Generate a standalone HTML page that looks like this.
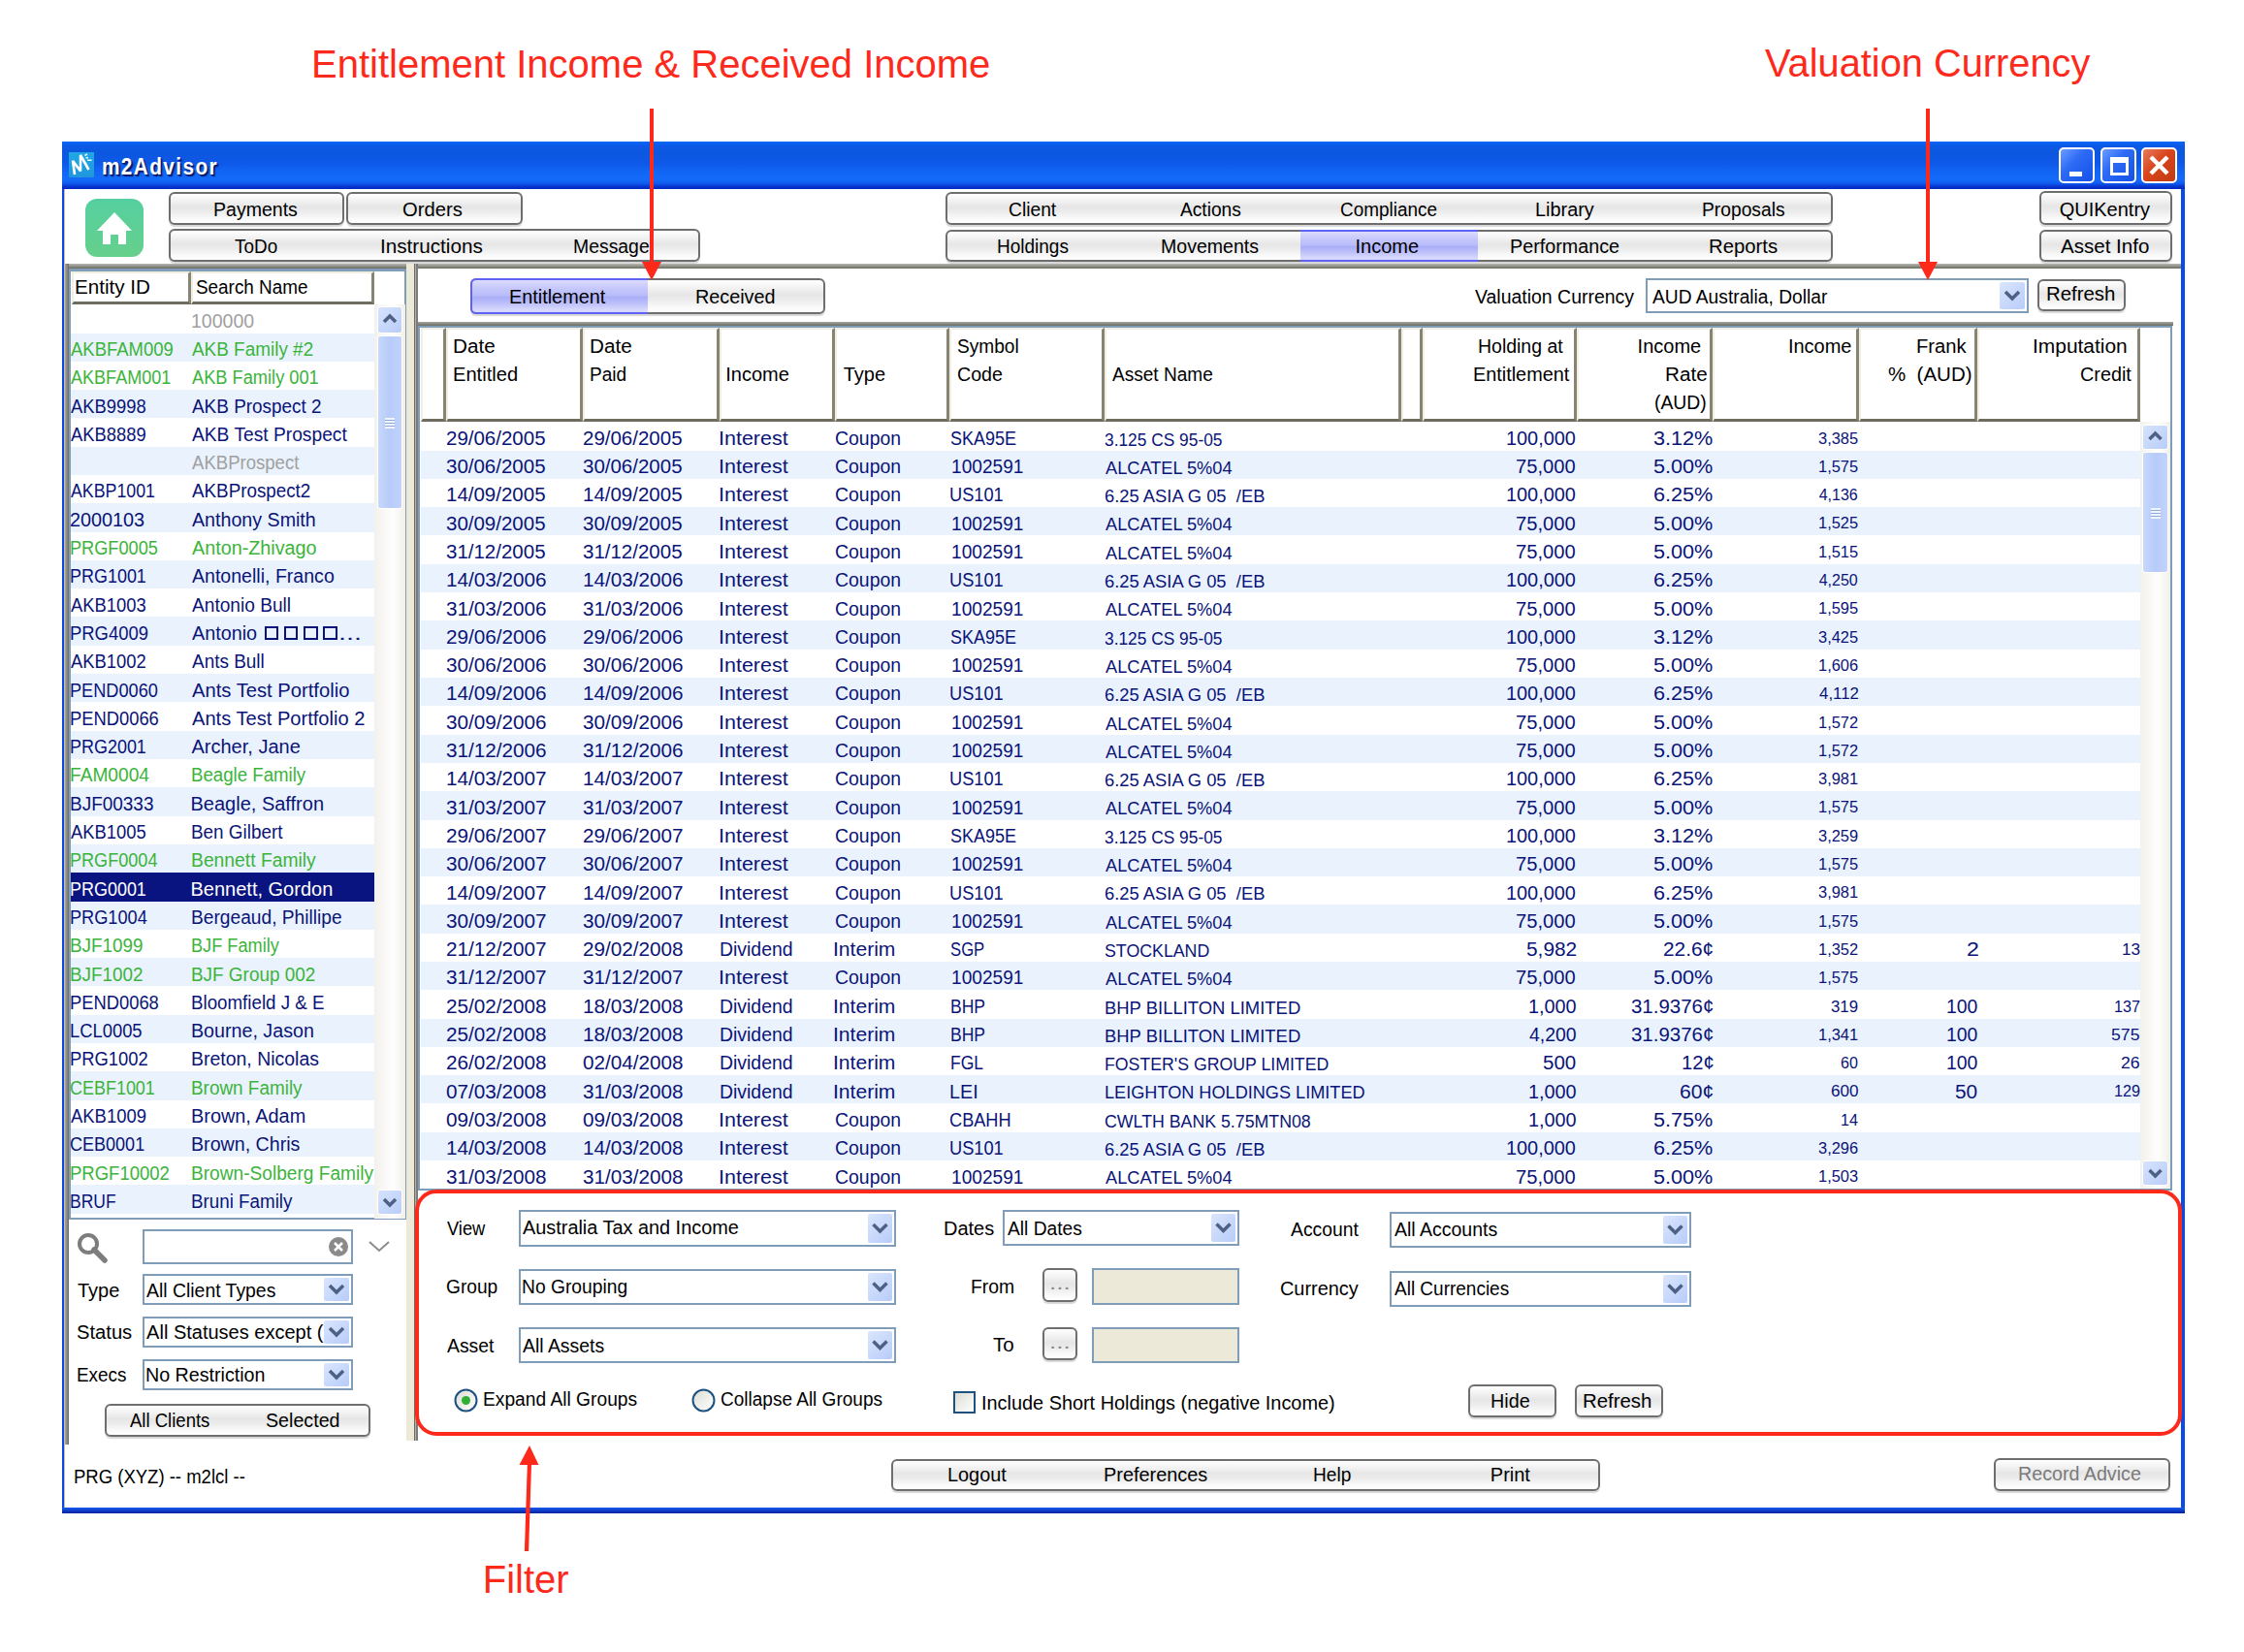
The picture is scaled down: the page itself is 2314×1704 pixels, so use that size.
<!DOCTYPE html><html><head><meta charset="utf-8"><title>m2Advisor</title><style>
*{margin:0;padding:0;box-sizing:border-box}
html,body{width:2314px;height:1704px;overflow:hidden;background:#fff}
body{position:relative;font-family:"Liberation Sans",sans-serif}
div{position:absolute}
.t{white-space:pre;line-height:1;transform-origin:0 0}
.btn{border:2px solid #6e6e6e;border-radius:6px;background:linear-gradient(#fff 0%,#f3f3f3 22%,#e6e6e6 45%,#ececec 62%,#f8f8f8 82%,#fff 100%);box-shadow:0 2px 1px rgba(0,0,0,.16)}
.combo{border:2px solid #7f9db9;background:#fff}
.dd{background:linear-gradient(135deg,#dbe6fd,#b7ccf9);border-radius:3px;border:1px solid #fff}
</style></head><body>
<div class="t" style="left:321.00px;top:45.64px;font-size:40px;color:#fd2a1c;">Entitlement Income &amp; Received Income</div>
<div class="t" style="left:1820.20px;top:45.14px;font-size:40px;color:#fd2a1c;transform:scaleX(0.9944);">Valuation Currency</div>
<div style="left:64px;top:146px;width:2189px;height:1415px;background:#fff"></div>
<div style="left:64px;top:146px;width:2189px;height:49px;background:linear-gradient(#0a66fa 0%,#0c5ae6 8%,#0c57de 22%,#0e58e8 45%,#1266f5 65%,#146af8 80%,#0e5cf0 88%,#0838d0 94%,#0028c0 100%)"></div>
<div style="left:64px;top:195px;width:2px;height:1366px;background:#0a48e0"></div>
<div style="left:66px;top:195px;width:1px;height:1366px;background:#c8c0b0"></div>
<div style="left:2249px;top:195px;width:4px;height:1366px;background:#0a4ae8"></div>
<div style="left:64px;top:1555px;width:2189px;height:6px;background:linear-gradient(#1a5af0,#0020a0)"></div>
<div class="t" style="left:104.82px;top:160.61px;font-size:23.5px;color:#fff;font-weight:bold;transform:scaleX(0.8835);text-shadow:1px 1px 0 #0a1a6a,2px 2px 1px #0a1a6a;letter-spacing:1.6px;">m2Advisor</div>
<div style="left:71px;top:157px;width:26px;height:26px;background:linear-gradient(#20a8e4,#2096dc)"><svg width="26" height="26" viewBox="0 0 26 26"><path d="M4 8.5 L6 23 M4.5 9.5 L12 19.5 L12 3 L20.5 18" stroke="#fff" stroke-width="2.6" fill="none" stroke-linejoin="bevel"/><path d="M19 8.3 L23.5 8.3 M16.5 3.5 L19 1.8 M17.5 6 L20 5.5" stroke="#e8f6ff" stroke-width="1.6"/></svg></div>
<div style="left:2123px;top:152px;width:37px;height:37px;border:2px solid #fff;border-radius:5px;background:linear-gradient(135deg,#6b9cff 0%,#2d6bf5 40%,#1450e8 100%)"><div style="left:9px;top:23px;width:13px;height:5px;background:#fff"></div></div>
<div style="left:2166px;top:152px;width:37px;height:37px;border:2px solid #fff;border-radius:5px;background:linear-gradient(135deg,#6b9cff 0%,#2d6bf5 40%,#1450e8 100%)"><div style="left:8px;top:8px;width:19px;height:19px;border:3px solid #fff;border-top-width:6px"></div></div>
<div style="left:2208px;top:152px;width:37px;height:37px;border:2px solid #fff;border-radius:5px;background:linear-gradient(135deg,#e8795a 0%,#d8451c 45%,#c23a12 100%)"><svg width="37" height="37" style="position:absolute;left:-2px;top:-2px"><path d="M10 10 L27 27 M27 10 L10 27" stroke="#fff" stroke-width="4.5"/></svg></div>
<div style="left:88px;top:205px;width:60px;height:60px;border-radius:12px;background:linear-gradient(#55cfa0,#66d08c)"><svg width="60" height="60" viewBox="0 0 60 60"><path d="M30 14 L48 33 L42 33 L42 47 L34 47 L34 37 L26 37 L26 47 L18 47 L18 33 L12 33 Z" fill="#fff"/></svg></div>
<div class="btn" style="left:174px;top:198px;width:181px;height:34px;"></div>
<div class="t" style="left:220.02px;top:205.87px;font-size:20px;color:#000;transform:scaleX(0.9770);">Payments</div>
<div class="btn" style="left:357px;top:198px;width:182px;height:34px;"></div>
<div class="t" style="left:415.39px;top:205.87px;font-size:20px;color:#000;transform:scaleX(1.0102);">Orders</div>
<div class="btn" style="left:174px;top:236px;width:548px;height:34px;"></div>
<div class="t" style="left:241.70px;top:243.97px;font-size:20px;color:#000;transform:scaleX(0.9457);">ToDo</div>
<div class="t" style="left:391.93px;top:243.97px;font-size:20px;color:#000;transform:scaleX(1.0340);">Instructions</div>
<div class="t" style="left:590.83px;top:243.97px;font-size:20px;color:#000;transform:scaleX(0.9696);">Message</div>
<div class="btn" style="left:975px;top:198px;width:915px;height:34px;"></div>
<div class="t" style="left:1039.94px;top:205.57px;font-size:20px;color:#000;transform:scaleX(0.9620);">Client</div>
<div class="t" style="left:1216.60px;top:205.57px;font-size:20px;color:#000;transform:scaleX(0.9585);">Actions</div>
<div class="t" style="left:1381.95px;top:205.57px;font-size:20px;color:#000;transform:scaleX(0.9462);">Compliance</div>
<div class="t" style="left:1583.01px;top:205.57px;font-size:20px;color:#000;transform:scaleX(0.9933);">Library</div>
<div class="t" style="left:1754.94px;top:205.57px;font-size:20px;color:#000;transform:scaleX(0.9621);">Proposals</div>
<div class="btn" style="left:975px;top:237px;width:915px;height:33px;"></div>
<div style="left:1341px;top:237px;width:183px;height:33px;background:linear-gradient(#dcdcfd 0%,#c6c8fb 25%,#b9bcfa 48%,#a9aef8 53%,#bcbffa 72%,#d6d8fc 92%);border-top:2px solid #5f62f4;border-bottom:2px solid #5f62f4"></div>
<div class="t" style="left:1028.45px;top:243.77px;font-size:20px;color:#000;transform:scaleX(0.9500);">Holdings</div>
<div class="t" style="left:1196.92px;top:243.77px;font-size:20px;color:#000;transform:scaleX(0.9775);">Movements</div>
<div class="t" style="left:1397.50px;top:243.77px;font-size:20px;color:#000;">Income</div>
<div class="t" style="left:1557.01px;top:243.77px;font-size:20px;color:#000;transform:scaleX(0.9867);">Performance</div>
<div class="t" style="left:1762.09px;top:243.77px;font-size:20px;color:#000;transform:scaleX(1.0147);">Reports</div>
<div class="btn" style="left:2103px;top:197px;width:137px;height:35px;"></div>
<div class="t" style="left:2123.70px;top:205.57px;font-size:20px;color:#000;">QUIKentry</div>
<div class="btn" style="left:2103px;top:237px;width:137px;height:33px;"></div>
<div class="t" style="left:2124.70px;top:244.07px;font-size:20px;color:#000;transform:scaleX(1.0273);">Asset Info</div>
<div style="left:67px;top:272px;width:2182px;height:5px;background:linear-gradient(#b8b8b4,#6b6b60)"></div>
<div style="left:67px;top:272px;width:4px;height:1218px;background:linear-gradient(90deg,#a8a8a4,#6b6b60)"></div>
<div style="left:71px;top:277px;width:348px;height:981px;border:2px solid #7f9db9;border-top-width:3px;background:#fff"></div>
<div style="left:74px;top:280px;width:123px;height:34px;background:#fff;border:2px solid #f1efe2;border-bottom:3px solid #6e6c5f;border-right:3px solid #878474"></div>
<div style="left:197px;top:280px;width:189px;height:34px;background:#fff;border:2px solid #f1efe2;border-bottom:3px solid #6e6c5f;border-right:3px solid #878474"></div>
<div class="t" style="left:77.07px;top:286.37px;font-size:20px;color:#000;transform:scaleX(1.0311);">Entity ID</div>
<div class="t" style="left:201.56px;top:286.37px;font-size:20px;color:#000;transform:scaleX(0.9446);">Search Name</div>
<div class="t" style="left:197.22px;top:320.67px;font-size:20px;color:#a0a0a0;transform:scaleX(0.9769);">100000</div>
<div style="left:73px;top:344px;width:313px;height:29px;background:#eaf3fd"></div>
<div class="t" style="left:73.20px;top:349.97px;font-size:20px;color:#3cb43c;transform:scaleX(0.9237);">AKBFAM009</div>
<div class="t" style="left:197.50px;top:349.97px;font-size:20px;color:#3cb43c;transform:scaleX(0.9462);">AKB Family #2</div>
<div class="t" style="left:73.20px;top:379.27px;font-size:20px;color:#3cb43c;transform:scaleX(0.9026);">AKBFAM001</div>
<div class="t" style="left:197.50px;top:379.27px;font-size:20px;color:#3cb43c;transform:scaleX(0.9119);">AKB Family 001</div>
<div style="left:73px;top:402px;width:313px;height:29px;background:#eaf3fd"></div>
<div class="t" style="left:73.20px;top:408.57px;font-size:20px;color:#0a1478;transform:scaleX(0.9190);">AKB9998</div>
<div class="t" style="left:197.50px;top:408.57px;font-size:20px;color:#0a1478;transform:scaleX(0.9464);">AKB Prospect 2</div>
<div class="t" style="left:73.20px;top:437.87px;font-size:20px;color:#0a1478;transform:scaleX(0.9190);">AKB8889</div>
<div class="t" style="left:197.50px;top:437.87px;font-size:20px;color:#0a1478;transform:scaleX(0.9602);">AKB Test Prospect</div>
<div style="left:73px;top:461px;width:313px;height:29px;background:#eaf3fd"></div>
<div class="t" style="left:197.50px;top:467.17px;font-size:20px;color:#a0a0a0;transform:scaleX(0.9277);">AKBProspect</div>
<div class="t" style="left:73.20px;top:496.47px;font-size:20px;color:#0a1478;transform:scaleX(0.8887);">AKBP1001</div>
<div class="t" style="left:197.50px;top:496.47px;font-size:20px;color:#0a1478;transform:scaleX(0.9403);">AKBProspect2</div>
<div style="left:73px;top:519px;width:313px;height:30px;background:#eaf3fd"></div>
<div class="t" style="left:72.21px;top:525.77px;font-size:20px;color:#0a1478;transform:scaleX(0.9908);">2000103</div>
<div class="t" style="left:197.50px;top:525.77px;font-size:20px;color:#0a1478;transform:scaleX(0.9822);">Anthony Smith</div>
<div class="t" style="left:72.29px;top:555.07px;font-size:20px;color:#3cb43c;transform:scaleX(0.9081);">PRGF0005</div>
<div class="t" style="left:197.50px;top:555.07px;font-size:20px;color:#3cb43c;transform:scaleX(0.9885);">Anton-Zhivago</div>
<div style="left:73px;top:578px;width:313px;height:29px;background:#eaf3fd"></div>
<div class="t" style="left:72.30px;top:584.37px;font-size:20px;color:#0a1478;transform:scaleX(0.8977);">PRG1001</div>
<div class="t" style="left:197.50px;top:584.37px;font-size:20px;color:#0a1478;transform:scaleX(0.9780);">Antonelli, Franco</div>
<div class="t" style="left:73.20px;top:613.67px;font-size:20px;color:#0a1478;transform:scaleX(0.9190);">AKB1003</div>
<div class="t" style="left:197.50px;top:613.67px;font-size:20px;color:#0a1478;transform:scaleX(0.9557);">Antonio Bull</div>
<div style="left:73px;top:636px;width:313px;height:30px;background:#eaf3fd"></div>
<div class="t" style="left:72.28px;top:642.97px;font-size:20px;color:#0a1478;transform:scaleX(0.9221);">PRG4009</div>
<div class="t" style="left:197.50px;top:642.97px;font-size:20px;color:#0a1478;transform:scaleX(0.9896);">Antonio</div>
<div style="left:272.9px;top:646px;width:14.5px;height:14px;border:2px solid #0a1478"></div>
<div style="left:292.8px;top:646px;width:14.5px;height:14px;border:2px solid #0a1478"></div>
<div style="left:313.4px;top:646px;width:14.5px;height:14px;border:2px solid #0a1478"></div>
<div style="left:333.3px;top:646px;width:14.5px;height:14px;border:2px solid #0a1478"></div>
<div class="t" style="left:349.02px;top:642.97px;font-size:20px;color:#0a1478;transform:scaleX(1.4385);">...</div>
<div class="t" style="left:73.20px;top:672.27px;font-size:20px;color:#0a1478;transform:scaleX(0.9190);">AKB1002</div>
<div class="t" style="left:197.50px;top:672.27px;font-size:20px;color:#0a1478;transform:scaleX(0.9474);">Ants Bull</div>
<div style="left:73px;top:695px;width:313px;height:29px;background:#eaf3fd"></div>
<div class="t" style="left:72.29px;top:701.57px;font-size:20px;color:#0a1478;transform:scaleX(0.9081);">PEND0060</div>
<div class="t" style="left:197.50px;top:701.57px;font-size:20px;color:#0a1478;transform:scaleX(1.0100);">Ants Test Portfolio</div>
<div class="t" style="left:72.28px;top:730.87px;font-size:20px;color:#0a1478;transform:scaleX(0.9173);">PEND0066</div>
<div class="t" style="left:197.50px;top:730.87px;font-size:20px;color:#0a1478;transform:scaleX(1.0051);">Ants Test Portfolio 2</div>
<div style="left:73px;top:754px;width:313px;height:29px;background:#eaf3fd"></div>
<div class="t" style="left:72.30px;top:760.17px;font-size:20px;color:#0a1478;transform:scaleX(0.8977);">PRG2001</div>
<div class="t" style="left:197.50px;top:760.17px;font-size:20px;color:#0a1478;">Archer, Jane</div>
<div class="t" style="left:72.24px;top:789.47px;font-size:20px;color:#3cb43c;transform:scaleX(0.9571);">FAM0004</div>
<div class="t" style="left:196.57px;top:789.47px;font-size:20px;color:#3cb43c;transform:scaleX(0.9325);">Beagle Family</div>
<div style="left:73px;top:812px;width:313px;height:30px;background:#eaf3fd"></div>
<div class="t" style="left:72.25px;top:818.77px;font-size:20px;color:#0a1478;transform:scaleX(0.9483);">BJF00333</div>
<div class="t" style="left:196.50px;top:818.77px;font-size:20px;color:#0a1478;">Beagle, Saffron</div>
<div class="t" style="left:73.20px;top:848.07px;font-size:20px;color:#0a1478;transform:scaleX(0.9190);">AKB1005</div>
<div class="t" style="left:196.56px;top:848.07px;font-size:20px;color:#0a1478;transform:scaleX(0.9444);">Ben Gilbert</div>
<div style="left:73px;top:871px;width:313px;height:29px;background:#eaf3fd"></div>
<div class="t" style="left:72.30px;top:877.37px;font-size:20px;color:#3cb43c;transform:scaleX(0.9040);">PRGF0004</div>
<div class="t" style="left:196.53px;top:877.37px;font-size:20px;color:#3cb43c;transform:scaleX(0.9654);">Bennett Family</div>
<div style="left:73px;top:900px;width:313px;height:30px;background:#0a1480"></div>
<div class="t" style="left:72.30px;top:906.67px;font-size:20px;color:#fff;transform:scaleX(0.8977);">PRG0001</div>
<div class="t" style="left:196.50px;top:906.67px;font-size:20px;color:#fff;">Bennett, Gordon</div>
<div style="left:73px;top:930px;width:313px;height:29px;background:#eaf3fd"></div>
<div class="t" style="left:72.29px;top:935.97px;font-size:20px;color:#0a1478;transform:scaleX(0.9080);">PRG1004</div>
<div class="t" style="left:196.54px;top:935.97px;font-size:20px;color:#0a1478;transform:scaleX(0.9584);">Bergeaud, Phillipe</div>
<div class="t" style="left:72.26px;top:965.27px;font-size:20px;color:#3cb43c;transform:scaleX(0.9423);">BJF1099</div>
<div class="t" style="left:196.59px;top:965.27px;font-size:20px;color:#3cb43c;transform:scaleX(0.9081);">BJF Family</div>
<div style="left:73px;top:988px;width:313px;height:29px;background:#eaf3fd"></div>
<div class="t" style="left:72.26px;top:994.57px;font-size:20px;color:#3cb43c;transform:scaleX(0.9423);">BJF1002</div>
<div class="t" style="left:196.55px;top:994.57px;font-size:20px;color:#3cb43c;transform:scaleX(0.9455);">BJF Group 002</div>
<div class="t" style="left:72.28px;top:1023.87px;font-size:20px;color:#0a1478;transform:scaleX(0.9173);">PEND0068</div>
<div class="t" style="left:196.56px;top:1023.87px;font-size:20px;color:#0a1478;transform:scaleX(0.9366);">Bloomfield J &amp; E</div>
<div style="left:73px;top:1047px;width:313px;height:29px;background:#eaf3fd"></div>
<div class="t" style="left:72.28px;top:1053.17px;font-size:20px;color:#0a1478;transform:scaleX(0.9187);">LCL0005</div>
<div class="t" style="left:196.52px;top:1053.17px;font-size:20px;color:#0a1478;transform:scaleX(0.9835);">Bourne, Jason</div>
<div class="t" style="left:72.28px;top:1082.47px;font-size:20px;color:#0a1478;transform:scaleX(0.9186);">PRG1002</div>
<div class="t" style="left:196.53px;top:1082.47px;font-size:20px;color:#0a1478;transform:scaleX(0.9731);">Breton, Nicolas</div>
<div style="left:73px;top:1105px;width:313px;height:30px;background:#eaf3fd"></div>
<div class="t" style="left:72.30px;top:1111.77px;font-size:20px;color:#3cb43c;transform:scaleX(0.8979);">CEBF1001</div>
<div class="t" style="left:196.55px;top:1111.77px;font-size:20px;color:#3cb43c;transform:scaleX(0.9458);">Brown Family</div>
<div class="t" style="left:73.20px;top:1141.07px;font-size:20px;color:#0a1478;transform:scaleX(0.9226);">AKB1009</div>
<div class="t" style="left:196.51px;top:1141.07px;font-size:20px;color:#0a1478;transform:scaleX(0.9940);">Brown, Adam</div>
<div style="left:73px;top:1164px;width:313px;height:29px;background:#eaf3fd"></div>
<div class="t" style="left:72.30px;top:1170.37px;font-size:20px;color:#0a1478;transform:scaleX(0.9012);">CEB0001</div>
<div class="t" style="left:196.52px;top:1170.37px;font-size:20px;color:#0a1478;transform:scaleX(0.9814);">Brown, Chris</div>
<div class="t" style="left:72.27px;top:1199.67px;font-size:20px;color:#3cb43c;transform:scaleX(0.9257);">PRGF10002</div>
<div class="t" style="left:196.54px;top:1199.67px;font-size:20px;color:#3cb43c;transform:scaleX(0.9556);">Brown-Solberg Family</div>
<div style="left:73px;top:1222px;width:313px;height:30px;background:#eaf3fd"></div>
<div class="t" style="left:72.33px;top:1228.97px;font-size:20px;color:#0a1478;transform:scaleX(0.8736);">BRUF</div>
<div class="t" style="left:196.56px;top:1228.97px;font-size:20px;color:#0a1478;transform:scaleX(0.9391);">Bruni Family</div>
<div style="left:386px;top:314px;width:32px;height:943px;background:linear-gradient(90deg,#f3f1ec,#fefefe 60%,#f0efe8)"></div>
<div style="left:389px;top:316px;width:26px;height:28px;border:1px solid #fff;border-radius:3px;background:linear-gradient(135deg,#d6e3fd,#b9cdf8)"><svg width="26" height="28" style="position:absolute;left:-1px;top:-1px"><path d="M7 15 L13 9 L19 15" transform="translate(0.0,1.0)" stroke="#4d6185" stroke-width="3.5" fill="none"/></svg></div>
<div style="left:389px;top:346px;width:26px;height:179px;border:1px solid #fff;border-radius:3px;background:linear-gradient(90deg,#c9d8fc,#b6cbf9 50%,#c2d3fb)"><div style="left:7.0px;top:83.5px;width:10px;height:11px;background:repeating-linear-gradient(#f0f4ff 0 2px,#8ea8e0 2px 3px)"></div></div>
<div style="left:389px;top:1227px;width:26px;height:26px;border:1px solid #fff;border-radius:3px;background:linear-gradient(135deg,#d6e3fd,#b9cdf8)"><svg width="26" height="26" style="position:absolute;left:-1px;top:-1px"><path d="M7 10 L13 16 L19 10" transform="translate(0.0,0.0)" stroke="#4d6185" stroke-width="3.5" fill="none"/></svg></div>
<div style="left:419px;top:272px;width:8px;height:1214px;background:#ece9d8"></div>
<div style="left:427px;top:272px;width:4px;height:1214px;background:linear-gradient(90deg,#6b6b60 0 25%,#b0b0b0 25% 50%,#7c7c7c 50%)"></div>
<div class="btn" style="left:485px;top:287px;width:366px;height:37px;"></div>
<div style="left:485px;top:287px;width:183px;height:37px;border:2px solid #5f62f4;border-right:none;border-radius:6px 0 0 6px;background:linear-gradient(#dcdcfd 0%,#c6c8fb 25%,#b9bcfa 48%,#a9aef8 53%,#bcbffa 72%,#d6d8fc 92%)"></div>
<div class="t" style="left:525.01px;top:295.67px;font-size:20px;color:#000;transform:scaleX(0.9919);">Entitlement</div>
<div class="t" style="left:717.41px;top:295.67px;font-size:20px;color:#000;transform:scaleX(0.9889);">Received</div>
<div class="t" style="left:1520.60px;top:296.27px;font-size:20px;color:#000;transform:scaleX(0.9728);">Valuation Currency</div>
<div class="combo" style="left:1697px;top:287px;width:395px;height:36px;background:#fff"></div>
<div class="dd" style="left:2061px;top:290px;width:28px;height:30px"><svg width="28" height="30" style="position:absolute;left:-1px;top:-1px"><path d="M7.0 11.0 L14.0 18.0 L21.0 11.0" stroke="#4d6185" stroke-width="3.5" fill="none"/></svg></div>
<div class="t" style="left:1703.70px;top:296.27px;font-size:20px;color:#000;transform:scaleX(0.9601);">AUD Australia, Dollar</div>
<div class="btn" style="left:2101px;top:288px;width:91px;height:33px;"></div>
<div class="t" style="left:2110.28px;top:293.07px;font-size:20px;color:#000;transform:scaleX(1.0191);">Refresh</div>
<div style="left:431px;top:332px;width:1810px;height:4px;background:linear-gradient(#a8a8a4,#6b6b60)"></div>
<div style="left:431px;top:336px;width:1809px;height:892px;border:2px solid #7f9db9;background:#fff"></div>
<div style="left:434px;top:338px;width:26px;height:97px;background:#fff;border:2px solid #f1efe2;border-bottom:3px solid #6e6c5f;border-right:3px solid #878474"></div>
<div style="left:460px;top:338px;width:141px;height:97px;background:#fff;border:2px solid #f1efe2;border-bottom:3px solid #6e6c5f;border-right:3px solid #878474"></div>
<div style="left:601px;top:338px;width:141px;height:97px;background:#fff;border:2px solid #f1efe2;border-bottom:3px solid #6e6c5f;border-right:3px solid #878474"></div>
<div style="left:742px;top:338px;width:119px;height:97px;background:#fff;border:2px solid #f1efe2;border-bottom:3px solid #6e6c5f;border-right:3px solid #878474"></div>
<div style="left:861px;top:338px;width:118px;height:97px;background:#fff;border:2px solid #f1efe2;border-bottom:3px solid #6e6c5f;border-right:3px solid #878474"></div>
<div style="left:979px;top:338px;width:160px;height:97px;background:#fff;border:2px solid #f1efe2;border-bottom:3px solid #6e6c5f;border-right:3px solid #878474"></div>
<div style="left:1139px;top:338px;width:306px;height:97px;background:#fff;border:2px solid #f1efe2;border-bottom:3px solid #6e6c5f;border-right:3px solid #878474"></div>
<div style="left:1445px;top:338px;width:22px;height:97px;background:#fff;border:2px solid #f1efe2;border-bottom:3px solid #6e6c5f;border-right:3px solid #878474"></div>
<div style="left:1467px;top:338px;width:159px;height:97px;background:#fff;border:2px solid #f1efe2;border-bottom:3px solid #6e6c5f;border-right:3px solid #878474"></div>
<div style="left:1626px;top:338px;width:140px;height:97px;background:#fff;border:2px solid #f1efe2;border-bottom:3px solid #6e6c5f;border-right:3px solid #878474"></div>
<div style="left:1766px;top:338px;width:151px;height:97px;background:#fff;border:2px solid #f1efe2;border-bottom:3px solid #6e6c5f;border-right:3px solid #878474"></div>
<div style="left:1917px;top:338px;width:122px;height:97px;background:#fff;border:2px solid #f1efe2;border-bottom:3px solid #6e6c5f;border-right:3px solid #878474"></div>
<div style="left:2039px;top:338px;width:168px;height:97px;background:#fff;border:2px solid #f1efe2;border-bottom:3px solid #6e6c5f;border-right:3px solid #878474"></div>
<div class="t" style="left:466.76px;top:346.97px;font-size:20px;color:#000;transform:scaleX(1.0350);">Date</div>
<div class="t" style="left:466.79px;top:376.07px;font-size:20px;color:#000;transform:scaleX(1.0062);">Entitled</div>
<div class="t" style="left:607.67px;top:346.97px;font-size:20px;color:#000;transform:scaleX(1.0350);">Date</div>
<div class="t" style="left:607.75px;top:376.07px;font-size:20px;color:#000;transform:scaleX(0.9526);">Paid</div>
<div class="t" style="left:748.30px;top:376.07px;font-size:20px;color:#000;">Income</div>
<div class="t" style="left:869.70px;top:376.07px;font-size:20px;color:#000;">Type</div>
<div class="t" style="left:986.54px;top:346.97px;font-size:20px;color:#000;transform:scaleX(0.9554);">Symbol</div>
<div class="t" style="left:986.52px;top:376.07px;font-size:20px;color:#000;transform:scaleX(0.9826);">Code</div>
<div class="t" style="left:1147.20px;top:376.07px;font-size:20px;color:#000;transform:scaleX(0.9528);">Asset Name</div>
<div class="t" style="left:1524.13px;top:346.97px;font-size:20px;color:#000;transform:scaleX(0.9730);">Holding at</div>
<div class="t" style="left:1518.81px;top:376.07px;font-size:20px;color:#000;transform:scaleX(0.9919);">Entitlement</div>
<div class="t" style="left:1688.60px;top:346.97px;font-size:20px;color:#000;">Income</div>
<div class="t" style="left:1716.67px;top:376.07px;font-size:20px;color:#000;transform:scaleX(1.0325);">Rate</div>
<div class="t" style="left:1705.73px;top:405.07px;font-size:20px;color:#000;transform:scaleX(0.9685);">(AUD)</div>
<div class="t" style="left:1843.90px;top:346.97px;font-size:20px;color:#000;">Income</div>
<div class="t" style="left:1976.09px;top:346.97px;font-size:20px;color:#000;transform:scaleX(1.0080);">Frank</div>
<div class="t" style="left:1946.88px;top:376.07px;font-size:20px;color:#000;transform:scaleX(1.0244);">%  (AUD)</div>
<div class="t" style="left:2096.31px;top:346.97px;font-size:20px;color:#000;transform:scaleX(1.0467);">Imputation</div>
<div class="t" style="left:2144.91px;top:376.07px;font-size:20px;color:#000;transform:scaleX(0.9904);">Credit</div>
<div class="t" style="left:459.68px;top:441.77px;font-size:20px;color:#0a1478;transform:scaleX(1.0242);">29/06/2005</div>
<div class="t" style="left:600.58px;top:441.77px;font-size:20px;color:#0a1478;transform:scaleX(1.0242);">29/06/2005</div>
<div class="t" style="left:740.85px;top:441.77px;font-size:20px;color:#0a1478;transform:scaleX(1.0738);">Interest</div>
<div class="t" style="left:860.53px;top:441.77px;font-size:20px;color:#0a1478;transform:scaleX(0.9721);">Coupon</div>
<div class="t" style="left:979.50px;top:441.77px;font-size:20px;color:#0a1478;transform:scaleX(0.9000);">SKA95E</div>
<div class="t" style="left:1138.71px;top:445.59px;font-size:17.5px;color:#0a1478;transform:scaleX(0.9909);">3.125 CS 95-05</div>
<div class="t" style="left:1553.41px;top:441.77px;font-size:20px;color:#0a1478;transform:scaleX(0.9944);">100,000</div>
<div class="t" style="left:1705.42px;top:441.77px;font-size:20px;color:#0a1478;transform:scaleX(1.0818);">3.12%</div>
<div class="t" style="left:1874.67px;top:444.56px;font-size:16px;color:#0a1478;transform:scaleX(1.0282);">3,385</div>
<div style="left:434px;top:465px;width:1773px;height:29px;background:#eaf3fd"></div>
<div class="t" style="left:459.68px;top:471.07px;font-size:20px;color:#0a1478;transform:scaleX(1.0242);">30/06/2005</div>
<div class="t" style="left:600.58px;top:471.07px;font-size:20px;color:#0a1478;transform:scaleX(1.0242);">30/06/2005</div>
<div class="t" style="left:740.85px;top:471.07px;font-size:20px;color:#0a1478;transform:scaleX(1.0738);">Interest</div>
<div class="t" style="left:860.53px;top:471.07px;font-size:20px;color:#0a1478;transform:scaleX(0.9721);">Coupon</div>
<div class="t" style="left:980.64px;top:471.07px;font-size:20px;color:#0a1478;transform:scaleX(0.9553);">1002591</div>
<div class="t" style="left:1139.70px;top:474.89px;font-size:17.5px;color:#0a1478;transform:scaleX(1.0400);">ALCATEL 5%04</div>
<div class="t" style="left:1563.49px;top:471.07px;font-size:20px;color:#0a1478;transform:scaleX(1.0083);">75,000</div>
<div class="t" style="left:1705.42px;top:471.07px;font-size:20px;color:#0a1478;transform:scaleX(1.0818);">5.00%</div>
<div class="t" style="left:1874.67px;top:473.86px;font-size:16px;color:#0a1478;transform:scaleX(1.0282);">1,575</div>
<div class="t" style="left:459.68px;top:500.37px;font-size:20px;color:#0a1478;transform:scaleX(1.0242);">14/09/2005</div>
<div class="t" style="left:600.58px;top:500.37px;font-size:20px;color:#0a1478;transform:scaleX(1.0242);">14/09/2005</div>
<div class="t" style="left:740.85px;top:500.37px;font-size:20px;color:#0a1478;transform:scaleX(1.0738);">Interest</div>
<div class="t" style="left:860.53px;top:500.37px;font-size:20px;color:#0a1478;transform:scaleX(0.9721);">Coupon</div>
<div class="t" style="left:979.49px;top:500.37px;font-size:20px;color:#0a1478;transform:scaleX(0.9119);">US101</div>
<div class="t" style="left:1138.65px;top:504.19px;font-size:17.5px;color:#0a1478;transform:scaleX(1.0494);">6.25 ASIA G 05  /EB</div>
<div class="t" style="left:1553.41px;top:500.37px;font-size:20px;color:#0a1478;transform:scaleX(0.9944);">100,000</div>
<div class="t" style="left:1705.42px;top:500.37px;font-size:20px;color:#0a1478;transform:scaleX(1.0818);">6.25%</div>
<div class="t" style="left:1875.70px;top:503.16px;font-size:16px;color:#0a1478;">4,136</div>
<div style="left:434px;top:523px;width:1773px;height:29px;background:#eaf3fd"></div>
<div class="t" style="left:459.68px;top:529.67px;font-size:20px;color:#0a1478;transform:scaleX(1.0242);">30/09/2005</div>
<div class="t" style="left:600.58px;top:529.67px;font-size:20px;color:#0a1478;transform:scaleX(1.0242);">30/09/2005</div>
<div class="t" style="left:740.85px;top:529.67px;font-size:20px;color:#0a1478;transform:scaleX(1.0738);">Interest</div>
<div class="t" style="left:860.53px;top:529.67px;font-size:20px;color:#0a1478;transform:scaleX(0.9721);">Coupon</div>
<div class="t" style="left:980.64px;top:529.67px;font-size:20px;color:#0a1478;transform:scaleX(0.9553);">1002591</div>
<div class="t" style="left:1139.70px;top:533.49px;font-size:17.5px;color:#0a1478;transform:scaleX(1.0400);">ALCATEL 5%04</div>
<div class="t" style="left:1563.49px;top:529.67px;font-size:20px;color:#0a1478;transform:scaleX(1.0083);">75,000</div>
<div class="t" style="left:1705.42px;top:529.67px;font-size:20px;color:#0a1478;transform:scaleX(1.0818);">5.00%</div>
<div class="t" style="left:1874.67px;top:532.46px;font-size:16px;color:#0a1478;transform:scaleX(1.0282);">1,525</div>
<div class="t" style="left:459.68px;top:558.97px;font-size:20px;color:#0a1478;transform:scaleX(1.0242);">31/12/2005</div>
<div class="t" style="left:600.58px;top:558.97px;font-size:20px;color:#0a1478;transform:scaleX(1.0242);">31/12/2005</div>
<div class="t" style="left:740.85px;top:558.97px;font-size:20px;color:#0a1478;transform:scaleX(1.0738);">Interest</div>
<div class="t" style="left:860.53px;top:558.97px;font-size:20px;color:#0a1478;transform:scaleX(0.9721);">Coupon</div>
<div class="t" style="left:980.64px;top:558.97px;font-size:20px;color:#0a1478;transform:scaleX(0.9553);">1002591</div>
<div class="t" style="left:1139.70px;top:562.79px;font-size:17.5px;color:#0a1478;transform:scaleX(1.0400);">ALCATEL 5%04</div>
<div class="t" style="left:1563.49px;top:558.97px;font-size:20px;color:#0a1478;transform:scaleX(1.0083);">75,000</div>
<div class="t" style="left:1705.42px;top:558.97px;font-size:20px;color:#0a1478;transform:scaleX(1.0818);">5.00%</div>
<div class="t" style="left:1874.67px;top:561.76px;font-size:16px;color:#0a1478;transform:scaleX(1.0282);">1,515</div>
<div style="left:434px;top:582px;width:1773px;height:29px;background:#eaf3fd"></div>
<div class="t" style="left:459.67px;top:588.27px;font-size:20px;color:#0a1478;transform:scaleX(1.0347);">14/03/2006</div>
<div class="t" style="left:600.57px;top:588.27px;font-size:20px;color:#0a1478;transform:scaleX(1.0347);">14/03/2006</div>
<div class="t" style="left:740.85px;top:588.27px;font-size:20px;color:#0a1478;transform:scaleX(1.0738);">Interest</div>
<div class="t" style="left:860.53px;top:588.27px;font-size:20px;color:#0a1478;transform:scaleX(0.9721);">Coupon</div>
<div class="t" style="left:979.49px;top:588.27px;font-size:20px;color:#0a1478;transform:scaleX(0.9119);">US101</div>
<div class="t" style="left:1138.65px;top:592.09px;font-size:17.5px;color:#0a1478;transform:scaleX(1.0494);">6.25 ASIA G 05  /EB</div>
<div class="t" style="left:1553.41px;top:588.27px;font-size:20px;color:#0a1478;transform:scaleX(0.9944);">100,000</div>
<div class="t" style="left:1705.42px;top:588.27px;font-size:20px;color:#0a1478;transform:scaleX(1.0818);">6.25%</div>
<div class="t" style="left:1875.70px;top:591.06px;font-size:16px;color:#0a1478;">4,250</div>
<div class="t" style="left:459.67px;top:617.57px;font-size:20px;color:#0a1478;transform:scaleX(1.0347);">31/03/2006</div>
<div class="t" style="left:600.57px;top:617.57px;font-size:20px;color:#0a1478;transform:scaleX(1.0347);">31/03/2006</div>
<div class="t" style="left:740.85px;top:617.57px;font-size:20px;color:#0a1478;transform:scaleX(1.0738);">Interest</div>
<div class="t" style="left:860.53px;top:617.57px;font-size:20px;color:#0a1478;transform:scaleX(0.9721);">Coupon</div>
<div class="t" style="left:980.64px;top:617.57px;font-size:20px;color:#0a1478;transform:scaleX(0.9553);">1002591</div>
<div class="t" style="left:1139.70px;top:621.39px;font-size:17.5px;color:#0a1478;transform:scaleX(1.0400);">ALCATEL 5%04</div>
<div class="t" style="left:1563.49px;top:617.57px;font-size:20px;color:#0a1478;transform:scaleX(1.0083);">75,000</div>
<div class="t" style="left:1705.42px;top:617.57px;font-size:20px;color:#0a1478;transform:scaleX(1.0818);">5.00%</div>
<div class="t" style="left:1874.67px;top:620.36px;font-size:16px;color:#0a1478;transform:scaleX(1.0282);">1,595</div>
<div style="left:434px;top:640px;width:1773px;height:30px;background:#eaf3fd"></div>
<div class="t" style="left:459.67px;top:646.87px;font-size:20px;color:#0a1478;transform:scaleX(1.0347);">29/06/2006</div>
<div class="t" style="left:600.57px;top:646.87px;font-size:20px;color:#0a1478;transform:scaleX(1.0347);">29/06/2006</div>
<div class="t" style="left:740.85px;top:646.87px;font-size:20px;color:#0a1478;transform:scaleX(1.0738);">Interest</div>
<div class="t" style="left:860.53px;top:646.87px;font-size:20px;color:#0a1478;transform:scaleX(0.9721);">Coupon</div>
<div class="t" style="left:979.50px;top:646.87px;font-size:20px;color:#0a1478;transform:scaleX(0.9000);">SKA95E</div>
<div class="t" style="left:1138.71px;top:650.69px;font-size:17.5px;color:#0a1478;transform:scaleX(0.9909);">3.125 CS 95-05</div>
<div class="t" style="left:1553.41px;top:646.87px;font-size:20px;color:#0a1478;transform:scaleX(0.9944);">100,000</div>
<div class="t" style="left:1705.42px;top:646.87px;font-size:20px;color:#0a1478;transform:scaleX(1.0818);">3.12%</div>
<div class="t" style="left:1874.67px;top:649.66px;font-size:16px;color:#0a1478;transform:scaleX(1.0282);">3,425</div>
<div class="t" style="left:459.67px;top:676.17px;font-size:20px;color:#0a1478;transform:scaleX(1.0347);">30/06/2006</div>
<div class="t" style="left:600.57px;top:676.17px;font-size:20px;color:#0a1478;transform:scaleX(1.0347);">30/06/2006</div>
<div class="t" style="left:740.85px;top:676.17px;font-size:20px;color:#0a1478;transform:scaleX(1.0738);">Interest</div>
<div class="t" style="left:860.53px;top:676.17px;font-size:20px;color:#0a1478;transform:scaleX(0.9721);">Coupon</div>
<div class="t" style="left:980.64px;top:676.17px;font-size:20px;color:#0a1478;transform:scaleX(0.9553);">1002591</div>
<div class="t" style="left:1139.70px;top:679.99px;font-size:17.5px;color:#0a1478;transform:scaleX(1.0400);">ALCATEL 5%04</div>
<div class="t" style="left:1563.49px;top:676.17px;font-size:20px;color:#0a1478;transform:scaleX(1.0083);">75,000</div>
<div class="t" style="left:1705.42px;top:676.17px;font-size:20px;color:#0a1478;transform:scaleX(1.0818);">5.00%</div>
<div class="t" style="left:1874.67px;top:678.96px;font-size:16px;color:#0a1478;transform:scaleX(1.0282);">1,606</div>
<div style="left:434px;top:699px;width:1773px;height:29px;background:#eaf3fd"></div>
<div class="t" style="left:459.67px;top:705.47px;font-size:20px;color:#0a1478;transform:scaleX(1.0347);">14/09/2006</div>
<div class="t" style="left:600.57px;top:705.47px;font-size:20px;color:#0a1478;transform:scaleX(1.0347);">14/09/2006</div>
<div class="t" style="left:740.85px;top:705.47px;font-size:20px;color:#0a1478;transform:scaleX(1.0738);">Interest</div>
<div class="t" style="left:860.53px;top:705.47px;font-size:20px;color:#0a1478;transform:scaleX(0.9721);">Coupon</div>
<div class="t" style="left:979.49px;top:705.47px;font-size:20px;color:#0a1478;transform:scaleX(0.9119);">US101</div>
<div class="t" style="left:1138.65px;top:709.29px;font-size:17.5px;color:#0a1478;transform:scaleX(1.0494);">6.25 ASIA G 05  /EB</div>
<div class="t" style="left:1553.41px;top:705.47px;font-size:20px;color:#0a1478;transform:scaleX(0.9944);">100,000</div>
<div class="t" style="left:1705.42px;top:705.47px;font-size:20px;color:#0a1478;transform:scaleX(1.0818);">6.25%</div>
<div class="t" style="left:1875.70px;top:708.26px;font-size:16px;color:#0a1478;transform:scaleX(1.0553);">4,112</div>
<div class="t" style="left:459.67px;top:734.77px;font-size:20px;color:#0a1478;transform:scaleX(1.0347);">30/09/2006</div>
<div class="t" style="left:600.57px;top:734.77px;font-size:20px;color:#0a1478;transform:scaleX(1.0347);">30/09/2006</div>
<div class="t" style="left:740.85px;top:734.77px;font-size:20px;color:#0a1478;transform:scaleX(1.0738);">Interest</div>
<div class="t" style="left:860.53px;top:734.77px;font-size:20px;color:#0a1478;transform:scaleX(0.9721);">Coupon</div>
<div class="t" style="left:980.64px;top:734.77px;font-size:20px;color:#0a1478;transform:scaleX(0.9553);">1002591</div>
<div class="t" style="left:1139.70px;top:738.59px;font-size:17.5px;color:#0a1478;transform:scaleX(1.0400);">ALCATEL 5%04</div>
<div class="t" style="left:1563.49px;top:734.77px;font-size:20px;color:#0a1478;transform:scaleX(1.0083);">75,000</div>
<div class="t" style="left:1705.42px;top:734.77px;font-size:20px;color:#0a1478;transform:scaleX(1.0818);">5.00%</div>
<div class="t" style="left:1874.67px;top:737.56px;font-size:16px;color:#0a1478;transform:scaleX(1.0282);">1,572</div>
<div style="left:434px;top:758px;width:1773px;height:29px;background:#eaf3fd"></div>
<div class="t" style="left:459.67px;top:764.07px;font-size:20px;color:#0a1478;transform:scaleX(1.0347);">31/12/2006</div>
<div class="t" style="left:600.57px;top:764.07px;font-size:20px;color:#0a1478;transform:scaleX(1.0347);">31/12/2006</div>
<div class="t" style="left:740.85px;top:764.07px;font-size:20px;color:#0a1478;transform:scaleX(1.0738);">Interest</div>
<div class="t" style="left:860.53px;top:764.07px;font-size:20px;color:#0a1478;transform:scaleX(0.9721);">Coupon</div>
<div class="t" style="left:980.64px;top:764.07px;font-size:20px;color:#0a1478;transform:scaleX(0.9553);">1002591</div>
<div class="t" style="left:1139.70px;top:767.89px;font-size:17.5px;color:#0a1478;transform:scaleX(1.0400);">ALCATEL 5%04</div>
<div class="t" style="left:1563.49px;top:764.07px;font-size:20px;color:#0a1478;transform:scaleX(1.0083);">75,000</div>
<div class="t" style="left:1705.42px;top:764.07px;font-size:20px;color:#0a1478;transform:scaleX(1.0818);">5.00%</div>
<div class="t" style="left:1874.67px;top:766.86px;font-size:16px;color:#0a1478;transform:scaleX(1.0282);">1,572</div>
<div class="t" style="left:459.67px;top:793.37px;font-size:20px;color:#0a1478;transform:scaleX(1.0347);">14/03/2007</div>
<div class="t" style="left:600.57px;top:793.37px;font-size:20px;color:#0a1478;transform:scaleX(1.0347);">14/03/2007</div>
<div class="t" style="left:740.85px;top:793.37px;font-size:20px;color:#0a1478;transform:scaleX(1.0738);">Interest</div>
<div class="t" style="left:860.53px;top:793.37px;font-size:20px;color:#0a1478;transform:scaleX(0.9721);">Coupon</div>
<div class="t" style="left:979.49px;top:793.37px;font-size:20px;color:#0a1478;transform:scaleX(0.9119);">US101</div>
<div class="t" style="left:1138.65px;top:797.19px;font-size:17.5px;color:#0a1478;transform:scaleX(1.0494);">6.25 ASIA G 05  /EB</div>
<div class="t" style="left:1553.41px;top:793.37px;font-size:20px;color:#0a1478;transform:scaleX(0.9944);">100,000</div>
<div class="t" style="left:1705.42px;top:793.37px;font-size:20px;color:#0a1478;transform:scaleX(1.0818);">6.25%</div>
<div class="t" style="left:1874.67px;top:796.16px;font-size:16px;color:#0a1478;transform:scaleX(1.0282);">3,981</div>
<div style="left:434px;top:816px;width:1773px;height:30px;background:#eaf3fd"></div>
<div class="t" style="left:459.67px;top:822.67px;font-size:20px;color:#0a1478;transform:scaleX(1.0347);">31/03/2007</div>
<div class="t" style="left:600.57px;top:822.67px;font-size:20px;color:#0a1478;transform:scaleX(1.0347);">31/03/2007</div>
<div class="t" style="left:740.85px;top:822.67px;font-size:20px;color:#0a1478;transform:scaleX(1.0738);">Interest</div>
<div class="t" style="left:860.53px;top:822.67px;font-size:20px;color:#0a1478;transform:scaleX(0.9721);">Coupon</div>
<div class="t" style="left:980.64px;top:822.67px;font-size:20px;color:#0a1478;transform:scaleX(0.9553);">1002591</div>
<div class="t" style="left:1139.70px;top:826.49px;font-size:17.5px;color:#0a1478;transform:scaleX(1.0400);">ALCATEL 5%04</div>
<div class="t" style="left:1563.49px;top:822.67px;font-size:20px;color:#0a1478;transform:scaleX(1.0083);">75,000</div>
<div class="t" style="left:1705.42px;top:822.67px;font-size:20px;color:#0a1478;transform:scaleX(1.0818);">5.00%</div>
<div class="t" style="left:1874.67px;top:825.46px;font-size:16px;color:#0a1478;transform:scaleX(1.0282);">1,575</div>
<div class="t" style="left:459.67px;top:851.97px;font-size:20px;color:#0a1478;transform:scaleX(1.0347);">29/06/2007</div>
<div class="t" style="left:600.57px;top:851.97px;font-size:20px;color:#0a1478;transform:scaleX(1.0347);">29/06/2007</div>
<div class="t" style="left:740.85px;top:851.97px;font-size:20px;color:#0a1478;transform:scaleX(1.0738);">Interest</div>
<div class="t" style="left:860.53px;top:851.97px;font-size:20px;color:#0a1478;transform:scaleX(0.9721);">Coupon</div>
<div class="t" style="left:979.50px;top:851.97px;font-size:20px;color:#0a1478;transform:scaleX(0.9000);">SKA95E</div>
<div class="t" style="left:1138.71px;top:855.79px;font-size:17.5px;color:#0a1478;transform:scaleX(0.9909);">3.125 CS 95-05</div>
<div class="t" style="left:1553.41px;top:851.97px;font-size:20px;color:#0a1478;transform:scaleX(0.9944);">100,000</div>
<div class="t" style="left:1705.42px;top:851.97px;font-size:20px;color:#0a1478;transform:scaleX(1.0818);">3.12%</div>
<div class="t" style="left:1874.67px;top:854.76px;font-size:16px;color:#0a1478;transform:scaleX(1.0282);">3,259</div>
<div style="left:434px;top:875px;width:1773px;height:29px;background:#eaf3fd"></div>
<div class="t" style="left:459.67px;top:881.27px;font-size:20px;color:#0a1478;transform:scaleX(1.0347);">30/06/2007</div>
<div class="t" style="left:600.57px;top:881.27px;font-size:20px;color:#0a1478;transform:scaleX(1.0347);">30/06/2007</div>
<div class="t" style="left:740.85px;top:881.27px;font-size:20px;color:#0a1478;transform:scaleX(1.0738);">Interest</div>
<div class="t" style="left:860.53px;top:881.27px;font-size:20px;color:#0a1478;transform:scaleX(0.9721);">Coupon</div>
<div class="t" style="left:980.64px;top:881.27px;font-size:20px;color:#0a1478;transform:scaleX(0.9553);">1002591</div>
<div class="t" style="left:1139.70px;top:885.09px;font-size:17.5px;color:#0a1478;transform:scaleX(1.0400);">ALCATEL 5%04</div>
<div class="t" style="left:1563.49px;top:881.27px;font-size:20px;color:#0a1478;transform:scaleX(1.0083);">75,000</div>
<div class="t" style="left:1705.42px;top:881.27px;font-size:20px;color:#0a1478;transform:scaleX(1.0818);">5.00%</div>
<div class="t" style="left:1874.67px;top:884.06px;font-size:16px;color:#0a1478;transform:scaleX(1.0282);">1,575</div>
<div class="t" style="left:459.67px;top:910.57px;font-size:20px;color:#0a1478;transform:scaleX(1.0347);">14/09/2007</div>
<div class="t" style="left:600.57px;top:910.57px;font-size:20px;color:#0a1478;transform:scaleX(1.0347);">14/09/2007</div>
<div class="t" style="left:740.85px;top:910.57px;font-size:20px;color:#0a1478;transform:scaleX(1.0738);">Interest</div>
<div class="t" style="left:860.53px;top:910.57px;font-size:20px;color:#0a1478;transform:scaleX(0.9721);">Coupon</div>
<div class="t" style="left:979.49px;top:910.57px;font-size:20px;color:#0a1478;transform:scaleX(0.9119);">US101</div>
<div class="t" style="left:1138.65px;top:914.39px;font-size:17.5px;color:#0a1478;transform:scaleX(1.0494);">6.25 ASIA G 05  /EB</div>
<div class="t" style="left:1553.41px;top:910.57px;font-size:20px;color:#0a1478;transform:scaleX(0.9944);">100,000</div>
<div class="t" style="left:1705.42px;top:910.57px;font-size:20px;color:#0a1478;transform:scaleX(1.0818);">6.25%</div>
<div class="t" style="left:1874.67px;top:913.36px;font-size:16px;color:#0a1478;transform:scaleX(1.0282);">3,981</div>
<div style="left:434px;top:933px;width:1773px;height:30px;background:#eaf3fd"></div>
<div class="t" style="left:459.67px;top:939.87px;font-size:20px;color:#0a1478;transform:scaleX(1.0347);">30/09/2007</div>
<div class="t" style="left:600.57px;top:939.87px;font-size:20px;color:#0a1478;transform:scaleX(1.0347);">30/09/2007</div>
<div class="t" style="left:740.85px;top:939.87px;font-size:20px;color:#0a1478;transform:scaleX(1.0738);">Interest</div>
<div class="t" style="left:860.53px;top:939.87px;font-size:20px;color:#0a1478;transform:scaleX(0.9721);">Coupon</div>
<div class="t" style="left:980.64px;top:939.87px;font-size:20px;color:#0a1478;transform:scaleX(0.9553);">1002591</div>
<div class="t" style="left:1139.70px;top:943.69px;font-size:17.5px;color:#0a1478;transform:scaleX(1.0400);">ALCATEL 5%04</div>
<div class="t" style="left:1563.49px;top:939.87px;font-size:20px;color:#0a1478;transform:scaleX(1.0083);">75,000</div>
<div class="t" style="left:1705.42px;top:939.87px;font-size:20px;color:#0a1478;transform:scaleX(1.0818);">5.00%</div>
<div class="t" style="left:1874.67px;top:942.66px;font-size:16px;color:#0a1478;transform:scaleX(1.0282);">1,575</div>
<div class="t" style="left:459.67px;top:969.17px;font-size:20px;color:#0a1478;transform:scaleX(1.0347);">21/12/2007</div>
<div class="t" style="left:600.57px;top:969.17px;font-size:20px;color:#0a1478;transform:scaleX(1.0347);">29/02/2008</div>
<div class="t" style="left:742.03px;top:969.17px;font-size:20px;color:#0a1478;transform:scaleX(0.9711);">Dividend</div>
<div class="t" style="left:859.39px;top:969.17px;font-size:20px;color:#0a1478;transform:scaleX(1.0534);">Interim</div>
<div class="t" style="left:979.57px;top:969.17px;font-size:20px;color:#0a1478;transform:scaleX(0.8341);">SGP</div>
<div class="t" style="left:1138.68px;top:972.99px;font-size:17.5px;color:#0a1478;transform:scaleX(1.0152);">STOCKLAND</div>
<div class="t" style="left:1573.96px;top:969.17px;font-size:20px;color:#0a1478;transform:scaleX(1.0417);">5,982</div>
<div class="t" style="left:1714.96px;top:969.17px;font-size:20px;color:#0a1478;transform:scaleX(1.0417);">22.6¢</div>
<div class="t" style="left:1874.67px;top:971.96px;font-size:16px;color:#0a1478;transform:scaleX(1.0282);">1,352</div>
<div class="t" style="left:2027.64px;top:969.17px;font-size:20px;color:#0a1478;transform:scaleX(1.1556);">2</div>
<div class="t" style="left:2187.62px;top:971.96px;font-size:16px;color:#0a1478;transform:scaleX(1.0750);">13</div>
<div style="left:434px;top:992px;width:1773px;height:29px;background:#eaf3fd"></div>
<div class="t" style="left:459.67px;top:998.47px;font-size:20px;color:#0a1478;transform:scaleX(1.0347);">31/12/2007</div>
<div class="t" style="left:600.57px;top:998.47px;font-size:20px;color:#0a1478;transform:scaleX(1.0347);">31/12/2007</div>
<div class="t" style="left:740.85px;top:998.47px;font-size:20px;color:#0a1478;transform:scaleX(1.0738);">Interest</div>
<div class="t" style="left:860.53px;top:998.47px;font-size:20px;color:#0a1478;transform:scaleX(0.9721);">Coupon</div>
<div class="t" style="left:980.64px;top:998.47px;font-size:20px;color:#0a1478;transform:scaleX(0.9553);">1002591</div>
<div class="t" style="left:1139.70px;top:1002.29px;font-size:17.5px;color:#0a1478;transform:scaleX(1.0400);">ALCATEL 5%04</div>
<div class="t" style="left:1563.49px;top:998.47px;font-size:20px;color:#0a1478;transform:scaleX(1.0083);">75,000</div>
<div class="t" style="left:1705.42px;top:998.47px;font-size:20px;color:#0a1478;transform:scaleX(1.0818);">5.00%</div>
<div class="t" style="left:1874.67px;top:1001.26px;font-size:16px;color:#0a1478;transform:scaleX(1.0282);">1,575</div>
<div class="t" style="left:459.67px;top:1027.77px;font-size:20px;color:#0a1478;transform:scaleX(1.0347);">25/02/2008</div>
<div class="t" style="left:600.57px;top:1027.77px;font-size:20px;color:#0a1478;transform:scaleX(1.0347);">18/03/2008</div>
<div class="t" style="left:742.03px;top:1027.77px;font-size:20px;color:#0a1478;transform:scaleX(0.9711);">Dividend</div>
<div class="t" style="left:859.39px;top:1027.77px;font-size:20px;color:#0a1478;transform:scaleX(1.0534);">Interim</div>
<div class="t" style="left:979.52px;top:1027.77px;font-size:20px;color:#0a1478;transform:scaleX(0.8769);">BHP</div>
<div class="t" style="left:1138.65px;top:1031.59px;font-size:17.5px;color:#0a1478;transform:scaleX(1.0537);">BHP BILLITON LIMITED</div>
<div class="t" style="left:1575.51px;top:1027.77px;font-size:20px;color:#0a1478;transform:scaleX(0.9898);">1,000</div>
<div class="t" style="left:1682.18px;top:1027.77px;font-size:20px;color:#0a1478;transform:scaleX(1.0222);">31.9376¢</div>
<div class="t" style="left:1888.45px;top:1030.56px;font-size:16px;color:#0a1478;transform:scaleX(1.0520);">319</div>
<div class="t" style="left:2007.13px;top:1027.77px;font-size:20px;color:#0a1478;transform:scaleX(0.9719);">100</div>
<div class="t" style="left:2179.59px;top:1030.56px;font-size:16px;color:#0a1478;transform:scaleX(1.0120);">137</div>
<div style="left:434px;top:1051px;width:1773px;height:29px;background:#eaf3fd"></div>
<div class="t" style="left:459.67px;top:1057.07px;font-size:20px;color:#0a1478;transform:scaleX(1.0347);">25/02/2008</div>
<div class="t" style="left:600.57px;top:1057.07px;font-size:20px;color:#0a1478;transform:scaleX(1.0347);">18/03/2008</div>
<div class="t" style="left:742.03px;top:1057.07px;font-size:20px;color:#0a1478;transform:scaleX(0.9711);">Dividend</div>
<div class="t" style="left:859.39px;top:1057.07px;font-size:20px;color:#0a1478;transform:scaleX(1.0534);">Interim</div>
<div class="t" style="left:979.52px;top:1057.07px;font-size:20px;color:#0a1478;transform:scaleX(0.8769);">BHP</div>
<div class="t" style="left:1138.65px;top:1060.89px;font-size:17.5px;color:#0a1478;transform:scaleX(1.0537);">BHP BILLITON LIMITED</div>
<div class="t" style="left:1576.50px;top:1057.07px;font-size:20px;color:#0a1478;transform:scaleX(0.9700);">4,200</div>
<div class="t" style="left:1682.18px;top:1057.07px;font-size:20px;color:#0a1478;transform:scaleX(1.0222);">31.9376¢</div>
<div class="t" style="left:1874.67px;top:1059.86px;font-size:16px;color:#0a1478;transform:scaleX(1.0282);">1,341</div>
<div class="t" style="left:2007.13px;top:1057.07px;font-size:20px;color:#0a1478;transform:scaleX(0.9719);">100</div>
<div class="t" style="left:2177.20px;top:1059.86px;font-size:16px;color:#0a1478;transform:scaleX(1.1040);">575</div>
<div class="t" style="left:459.67px;top:1086.37px;font-size:20px;color:#0a1478;transform:scaleX(1.0347);">26/02/2008</div>
<div class="t" style="left:600.57px;top:1086.37px;font-size:20px;color:#0a1478;transform:scaleX(1.0347);">02/04/2008</div>
<div class="t" style="left:742.03px;top:1086.37px;font-size:20px;color:#0a1478;transform:scaleX(0.9711);">Dividend</div>
<div class="t" style="left:859.39px;top:1086.37px;font-size:20px;color:#0a1478;transform:scaleX(1.0534);">Interim</div>
<div class="t" style="left:979.52px;top:1086.37px;font-size:20px;color:#0a1478;transform:scaleX(0.8757);">FGL</div>
<div class="t" style="left:1138.69px;top:1090.19px;font-size:17.5px;color:#0a1478;transform:scaleX(1.0115);">FOSTER&#x27;S GROUP LIMITED</div>
<div class="t" style="left:1591.17px;top:1086.37px;font-size:20px;color:#0a1478;transform:scaleX(1.0250);">500</div>
<div class="t" style="left:1733.69px;top:1086.37px;font-size:20px;color:#0a1478;transform:scaleX(1.0097);">12¢</div>
<div class="t" style="left:1897.69px;top:1089.16px;font-size:16px;color:#0a1478;transform:scaleX(1.0059);">60</div>
<div class="t" style="left:2007.13px;top:1086.37px;font-size:20px;color:#0a1478;transform:scaleX(0.9719);">100</div>
<div class="t" style="left:2187.09px;top:1089.16px;font-size:16px;color:#0a1478;transform:scaleX(1.1062);">26</div>
<div style="left:434px;top:1109px;width:1773px;height:29px;background:#eaf3fd"></div>
<div class="t" style="left:459.67px;top:1115.67px;font-size:20px;color:#0a1478;transform:scaleX(1.0347);">07/03/2008</div>
<div class="t" style="left:600.57px;top:1115.67px;font-size:20px;color:#0a1478;transform:scaleX(1.0347);">31/03/2008</div>
<div class="t" style="left:742.03px;top:1115.67px;font-size:20px;color:#0a1478;transform:scaleX(0.9711);">Dividend</div>
<div class="t" style="left:859.39px;top:1115.67px;font-size:20px;color:#0a1478;transform:scaleX(1.0534);">Interim</div>
<div class="t" style="left:979.41px;top:1115.67px;font-size:20px;color:#0a1478;transform:scaleX(0.9889);">LEI</div>
<div class="t" style="left:1138.66px;top:1119.49px;font-size:17.5px;color:#0a1478;transform:scaleX(1.0357);">LEIGHTON HOLDINGS LIMITED</div>
<div class="t" style="left:1575.51px;top:1115.67px;font-size:20px;color:#0a1478;transform:scaleX(0.9898);">1,000</div>
<div class="t" style="left:1732.14px;top:1115.67px;font-size:20px;color:#0a1478;transform:scaleX(1.0581);">60¢</div>
<div class="t" style="left:1887.93px;top:1118.46px;font-size:16px;color:#0a1478;transform:scaleX(1.0720);">600</div>
<div class="t" style="left:2016.26px;top:1115.67px;font-size:20px;color:#0a1478;transform:scaleX(1.0429);">50</div>
<div class="t" style="left:2179.59px;top:1118.46px;font-size:16px;color:#0a1478;transform:scaleX(1.0120);">129</div>
<div class="t" style="left:459.67px;top:1144.97px;font-size:20px;color:#0a1478;transform:scaleX(1.0347);">09/03/2008</div>
<div class="t" style="left:600.57px;top:1144.97px;font-size:20px;color:#0a1478;transform:scaleX(1.0347);">09/03/2008</div>
<div class="t" style="left:740.85px;top:1144.97px;font-size:20px;color:#0a1478;transform:scaleX(1.0738);">Interest</div>
<div class="t" style="left:860.53px;top:1144.97px;font-size:20px;color:#0a1478;transform:scaleX(0.9721);">Coupon</div>
<div class="t" style="left:979.49px;top:1144.97px;font-size:20px;color:#0a1478;transform:scaleX(0.9088);">CBAHH</div>
<div class="t" style="left:1138.69px;top:1148.79px;font-size:17.5px;color:#0a1478;transform:scaleX(1.0144);">CWLTH BANK 5.75MTN08</div>
<div class="t" style="left:1575.51px;top:1144.97px;font-size:20px;color:#0a1478;transform:scaleX(0.9898);">1,000</div>
<div class="t" style="left:1705.42px;top:1144.97px;font-size:20px;color:#0a1478;transform:scaleX(1.0818);">5.75%</div>
<div class="t" style="left:1897.69px;top:1147.76px;font-size:16px;color:#0a1478;transform:scaleX(1.0059);">14</div>
<div style="left:434px;top:1168px;width:1773px;height:29px;background:#eaf3fd"></div>
<div class="t" style="left:459.67px;top:1174.27px;font-size:20px;color:#0a1478;transform:scaleX(1.0347);">14/03/2008</div>
<div class="t" style="left:600.57px;top:1174.27px;font-size:20px;color:#0a1478;transform:scaleX(1.0347);">14/03/2008</div>
<div class="t" style="left:740.85px;top:1174.27px;font-size:20px;color:#0a1478;transform:scaleX(1.0738);">Interest</div>
<div class="t" style="left:860.53px;top:1174.27px;font-size:20px;color:#0a1478;transform:scaleX(0.9721);">Coupon</div>
<div class="t" style="left:979.49px;top:1174.27px;font-size:20px;color:#0a1478;transform:scaleX(0.9119);">US101</div>
<div class="t" style="left:1138.65px;top:1178.09px;font-size:17.5px;color:#0a1478;transform:scaleX(1.0494);">6.25 ASIA G 05  /EB</div>
<div class="t" style="left:1553.41px;top:1174.27px;font-size:20px;color:#0a1478;transform:scaleX(0.9944);">100,000</div>
<div class="t" style="left:1705.42px;top:1174.27px;font-size:20px;color:#0a1478;transform:scaleX(1.0818);">6.25%</div>
<div class="t" style="left:1874.67px;top:1177.06px;font-size:16px;color:#0a1478;transform:scaleX(1.0282);">3,296</div>
<div class="t" style="left:459.67px;top:1203.57px;font-size:20px;color:#0a1478;transform:scaleX(1.0347);">31/03/2008</div>
<div class="t" style="left:600.57px;top:1203.57px;font-size:20px;color:#0a1478;transform:scaleX(1.0347);">31/03/2008</div>
<div class="t" style="left:740.85px;top:1203.57px;font-size:20px;color:#0a1478;transform:scaleX(1.0738);">Interest</div>
<div class="t" style="left:860.53px;top:1203.57px;font-size:20px;color:#0a1478;transform:scaleX(0.9721);">Coupon</div>
<div class="t" style="left:980.64px;top:1203.57px;font-size:20px;color:#0a1478;transform:scaleX(0.9553);">1002591</div>
<div class="t" style="left:1139.70px;top:1207.39px;font-size:17.5px;color:#0a1478;transform:scaleX(1.0400);">ALCATEL 5%04</div>
<div class="t" style="left:1563.49px;top:1203.57px;font-size:20px;color:#0a1478;transform:scaleX(1.0083);">75,000</div>
<div class="t" style="left:1705.42px;top:1203.57px;font-size:20px;color:#0a1478;transform:scaleX(1.0818);">5.00%</div>
<div class="t" style="left:1874.67px;top:1206.36px;font-size:16px;color:#0a1478;transform:scaleX(1.0282);">1,503</div>
<div style="left:2207px;top:435px;width:31px;height:791px;background:linear-gradient(90deg,#f3f1ec,#fefefe 60%,#f0efe8)"></div>
<div style="left:2209px;top:438px;width:27px;height:26px;border:1px solid #fff;border-radius:3px;background:linear-gradient(135deg,#d6e3fd,#b9cdf8)"><svg width="27" height="26" style="position:absolute;left:-1px;top:-1px"><path d="M7 15 L13 9 L19 15" transform="translate(0.5,0.0)" stroke="#4d6185" stroke-width="3.5" fill="none"/></svg></div>
<div style="left:2209px;top:466px;width:27px;height:125px;border:1px solid #fff;border-radius:3px;background:linear-gradient(90deg,#c9d8fc,#b6cbf9 50%,#c2d3fb)"><div style="left:7.5px;top:56.5px;width:10px;height:11px;background:repeating-linear-gradient(#f0f4ff 0 2px,#8ea8e0 2px 3px)"></div></div>
<div style="left:2209px;top:1197px;width:27px;height:26px;border:1px solid #fff;border-radius:3px;background:linear-gradient(135deg,#d6e3fd,#b9cdf8)"><svg width="27" height="26" style="position:absolute;left:-1px;top:-1px"><path d="M7 10 L13 16 L19 10" transform="translate(0.5,0.0)" stroke="#4d6185" stroke-width="3.5" fill="none"/></svg></div>
<svg style="position:absolute;left:78px;top:1270px" width="36" height="34"><circle cx="13" cy="13" r="9" stroke="#7d7d7d" stroke-width="4" fill="none"/><path d="M19 19 L30 30" stroke="#7d7d7d" stroke-width="5.5" stroke-linecap="round"/></svg>
<div class="combo" style="left:147px;top:1268px;width:217px;height:36px;background:#fff"></div>
<svg style="position:absolute;left:338px;top:1275px" width="22" height="22"><circle cx="11" cy="11" r="10" fill="#8a8a8a"/><path d="M7 7 L15 15 M15 7 L7 15" stroke="#fff" stroke-width="2.5"/></svg>
<svg style="position:absolute;left:378px;top:1276px" width="28" height="20"><path d="M3 5 L13 14 L23 5" stroke="#8c8c8c" stroke-width="2" fill="none"/></svg>
<div class="t" style="left:80.00px;top:1320.57px;font-size:20px;color:#000;">Type</div>
<div class="combo" style="left:147px;top:1314px;width:217px;height:32px;background:#fff"></div>
<div class="dd" style="left:333px;top:1317px;width:28px;height:26px"><svg width="28" height="26" style="position:absolute;left:-1px;top:-1px"><path d="M7.0 9.0 L14.0 16.0 L21.0 9.0" stroke="#4d6185" stroke-width="3.5" fill="none"/></svg></div>
<div class="t" style="left:151.10px;top:1320.57px;font-size:20px;color:#000;transform:scaleX(0.9701);">All Client Types</div>
<div class="t" style="left:78.99px;top:1364.17px;font-size:20px;color:#000;transform:scaleX(1.0091);">Status</div>
<div class="combo" style="left:147px;top:1358px;width:217px;height:32px;background:#fff"></div>
<div class="dd" style="left:333px;top:1361px;width:28px;height:26px"><svg width="28" height="26" style="position:absolute;left:-1px;top:-1px"><path d="M7.0 9.0 L14.0 16.0 L21.0 9.0" stroke="#4d6185" stroke-width="3.5" fill="none"/></svg></div>
<div class="t" style="left:151.10px;top:1364.17px;font-size:20px;color:#000;">All Statuses except (</div>
<div class="t" style="left:79.06px;top:1407.87px;font-size:20px;color:#000;transform:scaleX(0.9434);">Execs</div>
<div class="combo" style="left:147px;top:1402px;width:217px;height:32px;background:#fff"></div>
<div class="dd" style="left:333px;top:1405px;width:28px;height:26px"><svg width="28" height="26" style="position:absolute;left:-1px;top:-1px"><path d="M7.0 9.0 L14.0 16.0 L21.0 9.0" stroke="#4d6185" stroke-width="3.5" fill="none"/></svg></div>
<div class="t" style="left:150.12px;top:1407.87px;font-size:20px;color:#000;transform:scaleX(0.9831);">No Restriction</div>
<div class="btn" style="left:108px;top:1448px;width:274px;height:34px;"></div>
<div class="t" style="left:134.00px;top:1455.47px;font-size:20px;color:#000;transform:scaleX(0.9261);">All Clients</div>
<div class="t" style="left:274.32px;top:1455.47px;font-size:20px;color:#000;transform:scaleX(0.9829);">Selected</div>
<div class="t" style="left:75.57px;top:1513.07px;font-size:20px;color:#000;transform:scaleX(0.9253);">PRG (XYZ) -- m2lcl --</div>
<div class="t" style="left:460.80px;top:1256.57px;font-size:20px;color:#000;transform:scaleX(0.9140);">View</div>
<div class="combo" style="left:535px;top:1248px;width:389px;height:38px;background:#fff"></div>
<div class="dd" style="left:894px;top:1251px;width:27px;height:32px"><svg width="27" height="32" style="position:absolute;left:-1px;top:-1px"><path d="M6.5 12.0 L13.5 19.0 L20.5 12.0" stroke="#4d6185" stroke-width="3.5" fill="none"/></svg></div>
<div class="t" style="left:539.40px;top:1256.27px;font-size:20px;color:#000;transform:scaleX(0.9937);">Australia Tax and Income</div>
<div class="t" style="left:459.84px;top:1316.77px;font-size:20px;color:#000;transform:scaleX(0.9574);">Group</div>
<div class="combo" style="left:535px;top:1309px;width:389px;height:37px;background:#fff"></div>
<div class="dd" style="left:894px;top:1312px;width:27px;height:31px"><svg width="27" height="31" style="position:absolute;left:-1px;top:-1px"><path d="M6.5 11.5 L13.5 18.5 L20.5 11.5" stroke="#4d6185" stroke-width="3.5" fill="none"/></svg></div>
<div class="t" style="left:538.44px;top:1316.77px;font-size:20px;color:#000;transform:scaleX(0.9622);">No Grouping</div>
<div class="t" style="left:460.80px;top:1377.87px;font-size:20px;color:#000;transform:scaleX(0.9680);">Asset</div>
<div class="combo" style="left:535px;top:1369px;width:389px;height:37px;background:#fff"></div>
<div class="dd" style="left:894px;top:1372px;width:27px;height:31px"><svg width="27" height="31" style="position:absolute;left:-1px;top:-1px"><path d="M6.5 11.5 L13.5 18.5 L20.5 11.5" stroke="#4d6185" stroke-width="3.5" fill="none"/></svg></div>
<div class="t" style="left:539.40px;top:1377.57px;font-size:20px;color:#000;transform:scaleX(0.9709);">All Assets</div>
<svg style="position:absolute;left:466px;top:1430px" width="30" height="30"><defs><linearGradient id="rg" x1="0" y1="0" x2="1" y2="1"><stop offset="0" stop-color="#dcdcd4"/><stop offset="1" stop-color="#ffffff"/></linearGradient></defs><circle cx="14.5" cy="14.5" r="11" fill="url(#rg)" stroke="#1c5180" stroke-width="2"/><circle cx="14.5" cy="14.5" r="4.5" fill="#30b030"/></svg>
<div class="t" style="left:498.04px;top:1433.07px;font-size:20px;color:#000;transform:scaleX(0.9604);">Expand All Groups</div>
<svg style="position:absolute;left:711px;top:1430px" width="30" height="30"><circle cx="14.5" cy="14.5" r="11" fill="url(#rg)" stroke="#1c5180" stroke-width="2"/></svg>
<div class="t" style="left:743.45px;top:1433.07px;font-size:20px;color:#000;transform:scaleX(0.9506);">Collapse All Groups</div>
<div class="t" style="left:973.00px;top:1256.57px;font-size:20px;color:#000;">Dates</div>
<div class="combo" style="left:1034px;top:1248px;width:244px;height:37px;background:#fff"></div>
<div class="dd" style="left:1248px;top:1251px;width:27px;height:31px"><svg width="27" height="31" style="position:absolute;left:-1px;top:-1px"><path d="M6.5 11.5 L13.5 18.5 L20.5 11.5" stroke="#4d6185" stroke-width="3.5" fill="none"/></svg></div>
<div class="t" style="left:1039.10px;top:1256.57px;font-size:20px;color:#000;transform:scaleX(0.9608);">All Dates</div>
<div class="t" style="left:1001.03px;top:1317.07px;font-size:20px;color:#000;transform:scaleX(0.9689);">From</div>
<div class="btn" style="left:1075px;top:1308px;width:36px;height:35px;"></div>
<div class="t" style="left:1081.88px;top:1313.07px;font-size:20px;color:#8a8a8a;transform:scaleX(1.3077);">...</div>
<div class="combo" style="left:1126px;top:1308px;width:152px;height:38px;background:#ece9d8"></div>
<div class="t" style="left:1024.00px;top:1377.07px;font-size:20px;color:#000;transform:scaleX(1.0286);">To</div>
<div class="btn" style="left:1075px;top:1369px;width:36px;height:34px;"></div>
<div class="t" style="left:1081.88px;top:1374.07px;font-size:20px;color:#8a8a8a;transform:scaleX(1.3077);">...</div>
<div class="combo" style="left:1126px;top:1369px;width:152px;height:37px;background:#ece9d8"></div>
<div class="t" style="left:1330.80px;top:1258.37px;font-size:20px;color:#000;transform:scaleX(0.9653);">Account</div>
<div class="combo" style="left:1433px;top:1250px;width:311px;height:37px;background:#fff"></div>
<div class="dd" style="left:1714px;top:1253px;width:27px;height:31px"><svg width="27" height="31" style="position:absolute;left:-1px;top:-1px"><path d="M6.5 11.5 L13.5 18.5 L20.5 11.5" stroke="#4d6185" stroke-width="3.5" fill="none"/></svg></div>
<div class="t" style="left:1437.70px;top:1258.37px;font-size:20px;color:#000;transform:scaleX(0.9741);">All Accounts</div>
<div class="t" style="left:1319.81px;top:1318.97px;font-size:20px;color:#000;transform:scaleX(0.9938);">Currency</div>
<div class="combo" style="left:1433px;top:1311px;width:311px;height:37px;background:#fff"></div>
<div class="dd" style="left:1714px;top:1314px;width:27px;height:31px"><svg width="27" height="31" style="position:absolute;left:-1px;top:-1px"><path d="M6.5 11.5 L13.5 18.5 L20.5 11.5" stroke="#4d6185" stroke-width="3.5" fill="none"/></svg></div>
<div class="t" style="left:1437.70px;top:1318.97px;font-size:20px;color:#000;transform:scaleX(0.9492);">All Currencies</div>
<div style="left:983px;top:1435px;width:23px;height:23px;border:2px solid #1c5180;background:linear-gradient(135deg,#dcdcd4,#fff)"></div>
<div class="t" style="left:1011.51px;top:1436.57px;font-size:20px;color:#000;transform:scaleX(0.9940);">Include Short Holdings (negative Income)</div>
<div class="btn" style="left:1514px;top:1428px;width:91px;height:34px;"></div>
<div class="t" style="left:1536.51px;top:1434.77px;font-size:20px;color:#000;transform:scaleX(0.9872);">Hide</div>
<div class="btn" style="left:1624px;top:1428px;width:91px;height:34px;"></div>
<div class="t" style="left:1631.98px;top:1434.77px;font-size:20px;color:#000;transform:scaleX(1.0191);">Refresh</div>
<div class="btn" style="left:919px;top:1505px;width:731px;height:33px;"></div>
<div class="t" style="left:977.01px;top:1511.17px;font-size:20px;color:#000;transform:scaleX(0.9933);">Logout</div>
<div class="t" style="left:1138.20px;top:1511.17px;font-size:20px;color:#000;transform:scaleX(0.9953);">Preferences</div>
<div class="t" style="left:1354.25px;top:1511.17px;font-size:20px;color:#000;transform:scaleX(0.9550);">Help</div>
<div class="t" style="left:1536.80px;top:1511.17px;font-size:20px;color:#000;">Print</div>
<div class="btn" style="left:2056px;top:1504px;width:182px;height:34px;"></div>
<div class="t" style="left:2081.32px;top:1510.37px;font-size:20px;color:#7a7a7a;transform:scaleX(0.9835);">Record Advice</div>
<div style="left:428px;top:1227px;width:1822px;height:254px;border:4px solid #fd2a1c;border-radius:22px"></div>
<svg style="position:absolute;left:0;top:0" width="2314" height="1704"><path d="M672 112 L672 272" stroke="#fd2a1c" stroke-width="4"/><path d="M662 270 L682 270 L672 289 Z" fill="#fd2a1c"/><path d="M1988 112 L1988 272" stroke="#fd2a1c" stroke-width="4"/><path d="M1978 270 L1998 270 L1988 289 Z" fill="#fd2a1c"/><path d="M543 1600 L546 1508" stroke="#fd2a1c" stroke-width="4.2"/><path d="M535.5 1511 L555.5 1511 L546 1491 Z" fill="#fd2a1c"/></svg>
<div class="t" style="left:497.81px;top:1609.14px;font-size:40px;color:#fd2a1c;">Filter</div>
</body></html>
